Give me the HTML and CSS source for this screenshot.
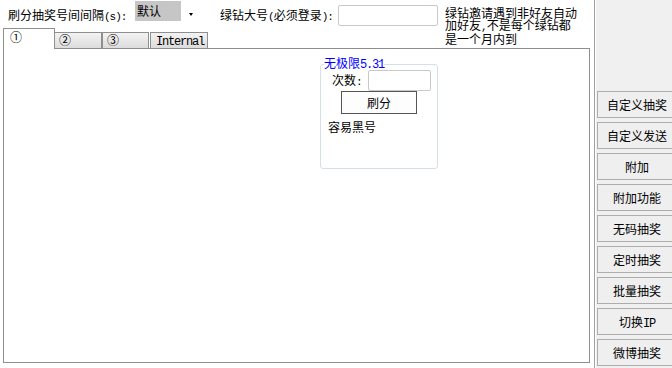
FILE: index.html
```html
<!DOCTYPE html>
<html>
<head>
<meta charset="utf-8">
<link rel="stylesheet" href="styles.css">
</head>
<body>
<div class="app">
  <div class="main">
    <div class="toprow">
      <span class="lbl lbl1">刷分抽奖号间间隔<span class="asc">(s):</span></span>
      <div class="combo"><span class="combo-val">默认</span><span class="combo-btn"><span class="tri"></span></span></div>
      <span class="lbl lbl2">绿钻大号<span class="asc">(</span>必须登录<span class="asc">):</span></span>
      <div class="textbox big"></div>
      <div class="note">绿钻邀请遇到非好友自动<br>加好友<span class="asc">,</span>不是每个绿钻都<br>是一个月内到</div>
    </div>
    <div class="tabs">
      <div class="tab active t1">①</div>
      <div class="tab t2">②</div>
      <div class="tab t3">③</div>
      <div class="tab t4"><span class="mono">Internal</span></div>
    </div>
    <div class="pane">
      <fieldset class="group">
        <legend class="legend">无极限<span class="mono">5.31</span></legend>
        <div class="grow">
          <span class="glbl">次数<span class="asc">:</span></span>
          <div class="textbox small"></div>
        </div>
        <button class="btn-shua">刷分</button>
        <div class="hint">容易黑号</div>
      </fieldset>
    </div>
  </div>
  <div class="side">
    <button class="sbtn">自定义抽奖</button>
    <button class="sbtn">自定义发送</button>
    <button class="sbtn">附加</button>
    <button class="sbtn">附加功能</button>
    <button class="sbtn">无码抽奖</button>
    <button class="sbtn">定时抽奖</button>
    <button class="sbtn">批量抽奖</button>
    <button class="sbtn">切换<span class="mono">IP</span></button>
    <button class="sbtn">微博抽奖</button>
  </div>
</div>
</body>
</html>
```

FILE: styles.css
```css
html, body {
  margin: 0;
  padding: 0;
}
body {
  width: 672px;
  height: 368px;
  overflow: hidden;
  background: #ffffff;
  font-family: "Noto Sans CJK SC", "Noto Sans", sans-serif;
  font-size: 12px;
  color: #000;
}
.app {
  display: flex;
  width: 672px;
  height: 368px;
}
.main {
  width: 594px;
  flex: none;
  display: flex;
  flex-direction: column;
}
.toprow {
  height: 28px;
  display: flex;
  align-items: flex-start;
  flex: none;
}
.lbl {
  line-height: 14px;
  margin-top: 8px;
  white-space: nowrap;
}
.lbl1 {
  width: 127px;
  padding-left: 8px;
}
.lbl2 {
  width: 118px;
  margin-left: 22px;
}
.asc {
  font-family: "Liberation Mono", monospace;
  font-size: 11px;
  letter-spacing: -1px;
}
.mono {
  font-family: "Liberation Mono", monospace;
  letter-spacing: -1.2px;
}
.combo {
  width: 63px;
  height: 20px;
  margin-top: 1px;
  display: flex;
}
.combo-val {
  width: 44px;
  background: #c6c6c6;
  line-height: 20px;
  padding-left: 2px;
}
.combo-btn {
  flex: 1;
  display: flex;
  justify-content: center;
  padding-left: 2px;
}
.tri {
  width: 0;
  height: 0;
  margin-top: 12px;
  border-left: 2.5px solid transparent;
  border-right: 2.5px solid transparent;
  border-top: 3px solid #000;
}
.textbox {
  box-sizing: border-box;
  border: 1px solid #c9c9c9;
  border-radius: 2px;
  background: #fff;
}
.big {
  width: 100px;
  height: 21px;
  margin-top: 5px;
}
.note {
  margin-left: 7px;
  margin-top: 7px;
  line-height: 12px;
  width: 140px;
  white-space: nowrap;
  position: relative;
  z-index: 2;
}
.tabs {
  height: 20px;
  display: flex;
  align-items: flex-end;
  padding-left: 3px;
  flex: none;
}
.tab {
  box-sizing: border-box;
  border: 1px solid #8e8f8f;
  border-bottom: none;
  height: 16px;
  line-height: 14px;
  padding-left: 4px;
  background: linear-gradient(#f3f3f3, #dcdcdc);
}
.tab.active {
  height: 21px;
  margin-bottom: -1px;
  background: #fff;
  padding-left: 6px;
  line-height: 15px;
  position: relative;
  z-index: 1;
}
.t1 { width: 52px; }
.t2 { width: 47px; border-left: none; }
.t3 { width: 47px; }
.t4 { width: 58px; margin-left: 1px; padding-left: 5px; }
.pane {
  box-sizing: border-box;
  margin-left: 3px;
  width: 587px;
  height: 315px;
  border: 1px solid #8e8f8f;
  background: #fff;
}
.group {
  box-sizing: border-box;
  margin: 8px 0 0 316px;
  width: 118px;
  height: 112px;
  padding: 0;
  border: 1px solid #d5dfe5;
  border-radius: 3px;
}
.legend {
  padding: 0;
  margin-left: 3px;
  color: #0000ff;
  line-height: 12px;
}
.legend .mono {
  font-size: 12px;
}
.grow {
  display: flex;
  align-items: center;
  margin-top: -1px;
}
.glbl {
  margin-left: 11px;
  width: 36px;
  line-height: 14px;
}
.small {
  width: 63px;
  height: 21px;
}
.btn-shua {
  display: block;
  box-sizing: border-box;
  margin: 0 0 0 20px;
  width: 76px;
  height: 23px;
  border: 1px solid #555;
  background: #fdfdfd;
  font-family: inherit;
  font-size: 12px;
  padding: 0;
  color: #000;
}
.hint {
  margin: 6px 0 0 7px;
  line-height: 14px;
}
.side {
  flex: 1;
  border-left: 1px solid #a0a0a0;
  box-shadow: inset 1px 0 #ffffff;
  background: #f0f0f0;
  padding: 91px 0 0 2px;
  display: flex;
  flex-direction: column;
  gap: 4px;
  overflow: hidden;
}
.sbtn {
  flex: none;
  box-sizing: border-box;
  width: 78px;
  height: 27px;
  border: 1px solid #adadad;
  background: #efefef;
  font-family: inherit;
  font-size: 12px;
  padding: 0 0 0 2px;
  color: #000;
  text-align: center;
}
```
